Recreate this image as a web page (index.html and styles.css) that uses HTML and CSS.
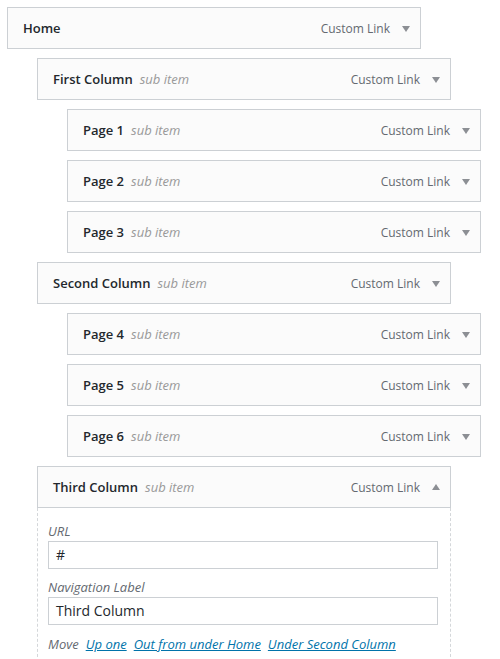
FILE: index.html
```html
<!DOCTYPE html>
<html>
<head>
<meta charset="utf-8">
<link rel="stylesheet" href="styles.css">
</head>
<body>
<ul class="menu">
  <li class="item depth-0"><div class="bar"><span class="title">Home</span><span class="type">Custom Link</span><span class="arrow down"></span></div></li>
  <li class="item depth-1"><div class="bar"><span class="title">First Column</span><span class="sub">sub item</span><span class="type">Custom Link</span><span class="arrow down"></span></div></li>
  <li class="item depth-2"><div class="bar"><span class="title">Page 1</span><span class="sub">sub item</span><span class="type">Custom Link</span><span class="arrow down"></span></div></li>
  <li class="item depth-2"><div class="bar"><span class="title">Page 2</span><span class="sub">sub item</span><span class="type">Custom Link</span><span class="arrow down"></span></div></li>
  <li class="item depth-2"><div class="bar"><span class="title">Page 3</span><span class="sub">sub item</span><span class="type">Custom Link</span><span class="arrow down"></span></div></li>
  <li class="item depth-1"><div class="bar"><span class="title">Second Column</span><span class="sub">sub item</span><span class="type">Custom Link</span><span class="arrow down"></span></div></li>
  <li class="item depth-2"><div class="bar"><span class="title">Page 4</span><span class="sub">sub item</span><span class="type">Custom Link</span><span class="arrow down"></span></div></li>
  <li class="item depth-2"><div class="bar"><span class="title">Page 5</span><span class="sub">sub item</span><span class="type">Custom Link</span><span class="arrow down"></span></div></li>
  <li class="item depth-2"><div class="bar"><span class="title">Page 6</span><span class="sub">sub item</span><span class="type">Custom Link</span><span class="arrow down"></span></div></li>
  <li class="item depth-1 open">
    <div class="bar"><span class="title">Third Column</span><span class="sub">sub item</span><span class="type">Custom Link</span><span class="arrow up"></span></div>
    <div class="settings">
      <label class="field-label">URL</label>
      <div class="input">#</div>
      <label class="field-label">Navigation Label</label>
      <div class="input">Third Column</div>
      <div class="move"><span class="move-label">Move</span><a href="#">Up one</a><a href="#">Out from under Home</a><a href="#">Under Second Column</a></div>
    </div>
  </li>
</ul>
</body>
</html>
```

FILE: styles.css
```css
html, body {
  margin: 0;
  padding: 0;
  background: #ffffff;
}
body {
  font-family: "Open Sans", "Liberation Sans", sans-serif;
  font-size: 13px;
  color: #23282d;
}
.menu {
  list-style: none;
  margin: 0;
  padding: 7px 0 0 7px;
}
.item {
  width: 414px;
  margin-bottom: 9px;
}
.depth-1 { margin-left: 30px; }
.depth-2 { margin-left: 60px; }
.bar {
  box-sizing: border-box;
  height: 42px;
  border: 1px solid #ccd0d4;
  background: #fbfbfb;
  display: flex;
  align-items: center;
  padding: 0 10px 0 15px;
}
.title {
  font-weight: 600;
  color: #23282d;
}
.sub {
  font-style: italic;
  color: #999999;
  margin-left: 7px;
}
.type {
  margin-left: auto;
  font-size: 12px;
  color: #646970;
}
.arrow {
  width: 0;
  height: 0;
  margin-left: 12px;
  border-left: 4px solid transparent;
  border-right: 4px solid transparent;
}
.arrow.down { border-top: 6px solid #8c8f94; margin-top: 1px; }
.arrow.up { border-bottom: 6px solid #8c8f94; margin-top: -1px; }
.settings {
  border: 1px dashed #d4d7da;
  border-top: none;
  border-bottom: none;
  padding: 13px 10px 8px 10px;
  background: #ffffff;
}
.field-label {
  display: block;
  font-style: italic;
  color: #646970;
  line-height: 20px;
}
.input {
  box-sizing: border-box;
  width: 390px;
  height: 28px;
  border: 1px solid #ccd0d4;
  padding: 0 7px;
  font-size: 14px;
  line-height: 26px;
  color: #23282d;
  margin-bottom: 8px;
}
.move {
  font-style: italic;
  color: #646970;
  line-height: 20px;
  margin-top: 9px;
  display: flex;
  gap: 7px;
}
.move a {
  color: #0073aa;
  text-decoration: underline;
}
```
